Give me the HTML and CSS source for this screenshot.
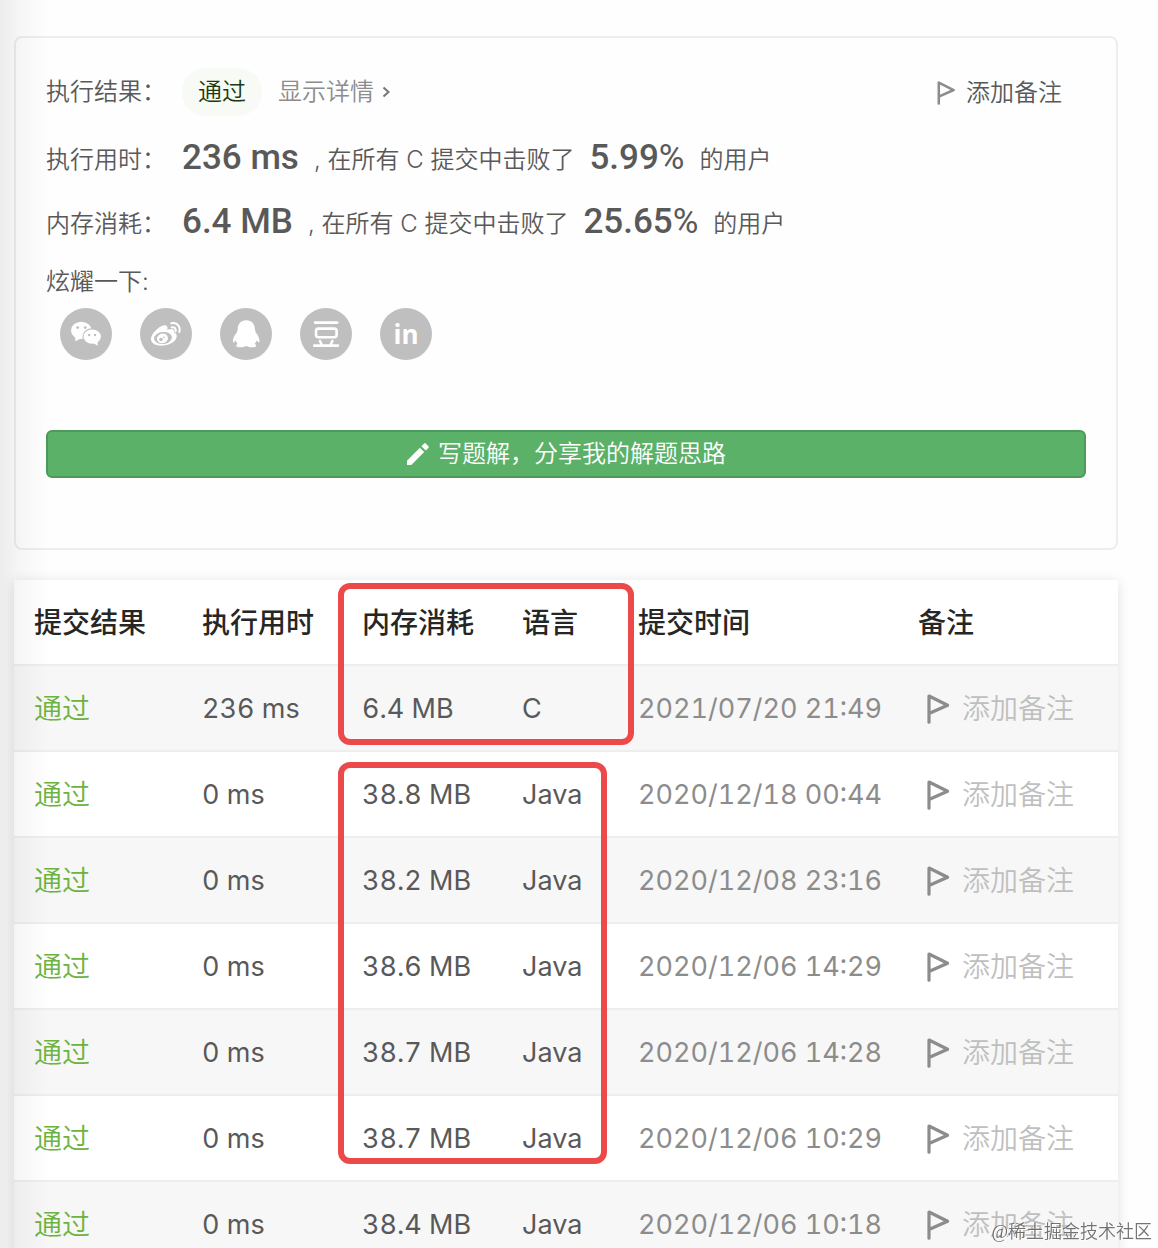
FILE: index.html
```html
<!DOCTYPE html>
<html lang="zh-CN">

<head>
    <meta charset="UTF-8">
    <meta name="viewport" content="width=device-width, initial-scale=1.0">
    <title>提交记录</title>
    <link rel="stylesheet" href="styles.css">
</head>

<body>
    <svg class="sprite" aria-hidden="true">
        <symbol id="flag" viewBox="0 0 24 30">
            <path d="M3 28.2V2L21.6 11.3L3 19.5" fill="none" stroke="currentColor" stroke-width="3.2" stroke-linecap="round" stroke-linejoin="round" />
        </symbol>
    </svg>

    <main class="page">
        <section class="result">
            <div class="row status">
                <span class="label">执行结果：</span>
                <span class="badge">通过</span>
                <a class="detail" href="#">显示详情
                    <svg class="chevron" viewBox="0 0 8 12"><path d="M1.5 1.5L6.5 6L1.5 10.5" /></svg>
                </a>
                <button class="note" type="button"><svg class="flag"><use href="#flag" /></svg>添加备注</button>
            </div>
            <div class="row stat">
                <span class="label">执行用时：</span>
                <strong>236 ms</strong>
                <span class="text">, 在所有 C 提交中击败了</span>
                <strong>5.99<span class="percent">%</span></strong>
                <span class="text">的用户</span>
            </div>
            <div class="row stat">
                <span class="label">内存消耗：</span>
                <strong>6.4 MB</strong>
                <span class="text">, 在所有 C 提交中击败了</span>
                <strong>25.65<span class="percent">%</span></strong>
                <span class="text">的用户</span>
            </div>
            <div class="share-title">炫耀一下:</div>
            <div class="share">
                <a href="#" aria-label="微信">
                    <svg viewBox="0 0 52 52">
                        <ellipse cx="21.3" cy="22.4" rx="10.3" ry="8.6" />
                        <path d="M15 28L15.4 33.2L21 30.5Z" />
                        <ellipse class="cut" cx="32.2" cy="28.6" rx="9.8" ry="8.4" />
                        <ellipse cx="32.2" cy="28.6" rx="8.7" ry="7.2" />
                        <path d="M33 35L38 37.8L37.4 33Z" />
                        <circle class="cut" cx="17.7" cy="19.6" r="1.4" />
                        <circle class="cut" cx="25.2" cy="19.6" r="1.4" />
                        <circle class="cut" cx="29.2" cy="27" r="1.2" />
                        <circle class="cut" cx="35" cy="27" r="1.2" />
                    </svg>
                </a>
                <a href="#" aria-label="微博">
                    <svg viewBox="0 0 52 52">
                        <path d="M11 31C11 26 19 17.5 24.5 17.2C27.5 17 28 19.5 27.2 22C31 20.5 34.5 20.5 34.2 24.6C38 26 37 30.5 34.5 33C28 39.5 11 39.5 11 31Z" />
                        <ellipse class="cut" cx="23" cy="30" rx="9" ry="6" transform="rotate(-7 23 30)" />
                        <ellipse cx="22.4" cy="30.4" rx="5.6" ry="4.8" transform="rotate(-15 22.4 30.4)" />
                        <circle class="cut" cx="21" cy="31.5" r="1.8" />
                        <circle class="cut" cx="24" cy="29.4" r="0.8" />
                        <path class="line thin" d="M31.2 15.3C36.5 13.7 41 18.5 39.3 24M31.7 19.3C34.3 18.6 36.3 20.6 35.6 23.3" />
                    </svg>
                </a>
                <a href="#" aria-label="QQ">
                    <svg viewBox="0 0 52 52">
                        <path d="M26.3 12.3C20.6 12.3 17.6 16.3 17.7 21.7C17.3 22.3 17 23.1 17.1 24C14.5 27 12.6 30.8 13 33.8C13.2 35.3 14.8 34 15.7 32.3C16 33.7 16.8 35 17.8 36C16.7 36.5 16 37.2 16.2 38C16.8 39.8 23.5 39.6 26.2 38C29 39.6 35.6 39.8 36.2 38C36.4 37.2 35.7 36.5 34.6 36C35.7 35 36.4 33.7 36.8 32.3C37.7 34 39.2 35.3 39.4 33.8C39.8 30.8 38 27 35.5 24C35.6 23.1 35.3 22.3 34.9 21.7C35 16.3 32 12.3 26.3 12.3Z" />
                    </svg>
                </a>
                <a href="#" aria-label="豆瓣">
                    <svg viewBox="0 0 52 52">
                        <path class="line" d="M15 14.6H37.3M14.2 37.6H38M20 33L21.4 36M32.4 33L31 36" />
                        <rect class="line" x="16" y="20.6" width="20.6" height="8.6" rx="2.5" />
                    </svg>
                </a>
                <a class="linkedin" href="#" aria-label="LinkedIn">in</a>
            </div>
            <button class="write" type="button">
                <svg viewBox="0 0 24 24"><path d="M1 18.7V23H5.3L18.2 10.1L13.9 5.8ZM22.4 5.9C22.9 5.4 22.9 4.7 22.4 4.2L19.8 1.6C19.3 1.1 18.6 1.1 18.1 1.6L15.4 4.3L19.7 8.6Z" /></svg>
                写题解，分享我的解题思路
            </button>
        </section>

        <section class="history">
            <table>
                <colgroup>
                    <col class="col-result">
                    <col class="col-time">
                    <col class="col-memory">
                    <col class="col-lang">
                    <col class="col-date">
                    <col class="col-note">
                </colgroup>
                <thead>
                    <tr>
                        <th>提交结果</th>
                        <th>执行用时</th>
                        <th>内存消耗</th>
                        <th>语言</th>
                        <th>提交时间</th>
                        <th>备注</th>
                    </tr>
                </thead>
                <tbody>
                    <tr>
                        <td><a href="#">通过</a></td>
                        <td>236 ms</td>
                        <td>6.4 MB</td>
                        <td>C</td>
                        <td class="date">2021/07/20 21:49</td>
                        <td><button class="note" type="button"><svg class="flag"><use href="#flag" /></svg>添加备注</button></td>
                    </tr>
                    <tr>
                        <td><a href="#">通过</a></td>
                        <td>0 ms</td>
                        <td>38.8 MB</td>
                        <td>Java</td>
                        <td class="date">2020/12/18 00:44</td>
                        <td><button class="note" type="button"><svg class="flag"><use href="#flag" /></svg>添加备注</button></td>
                    </tr>
                    <tr>
                        <td><a href="#">通过</a></td>
                        <td>0 ms</td>
                        <td>38.2 MB</td>
                        <td>Java</td>
                        <td class="date">2020/12/08 23:16</td>
                        <td><button class="note" type="button"><svg class="flag"><use href="#flag" /></svg>添加备注</button></td>
                    </tr>
                    <tr>
                        <td><a href="#">通过</a></td>
                        <td>0 ms</td>
                        <td>38.6 MB</td>
                        <td>Java</td>
                        <td class="date">2020/12/06 14:29</td>
                        <td><button class="note" type="button"><svg class="flag"><use href="#flag" /></svg>添加备注</button></td>
                    </tr>
                    <tr>
                        <td><a href="#">通过</a></td>
                        <td>0 ms</td>
                        <td>38.7 MB</td>
                        <td>Java</td>
                        <td class="date">2020/12/06 14:28</td>
                        <td><button class="note" type="button"><svg class="flag"><use href="#flag" /></svg>添加备注</button></td>
                    </tr>
                    <tr>
                        <td><a href="#">通过</a></td>
                        <td>0 ms</td>
                        <td>38.7 MB</td>
                        <td>Java</td>
                        <td class="date">2020/12/06 10:29</td>
                        <td><button class="note" type="button"><svg class="flag"><use href="#flag" /></svg>添加备注</button></td>
                    </tr>
                    <tr>
                        <td><a href="#">通过</a></td>
                        <td>0 ms</td>
                        <td>38.4 MB</td>
                        <td>Java</td>
                        <td class="date">2020/12/06 10:18</td>
                        <td><button class="note" type="button"><svg class="flag"><use href="#flag" /></svg>添加备注</button></td>
                    </tr>
                </tbody>
            </table>
            <div class="mark mark-c"></div>
            <div class="mark mark-java"></div>
        </section>
    </main>
    <div class="edge"></div>
    <div class="watermark">@稀土掘金技术社区</div>
</body>

</html>
```
FILE: styles.css
```css
* {
    box-sizing: border-box;
}

body {
    margin: 0;
    height: 100vh;
    overflow: hidden;
    background-color: #fefefe;
    color: #595959;
    font-family: Inter, "Noto Sans CJK SC", sans-serif;
    font-size: 24px;
    font-weight: 350;
    line-height: 36px;
}

a {
    color: inherit;
    text-decoration: none;
}

button {
    font: inherit;
    color: inherit;
    border: none;
    background: none;
    padding: 0;
    cursor: pointer;
}

.sprite {
    display: none;
}

.page {
    padding: 36px 40px 0 14px;
}

/* Result card */
.result {
    padding: 30px 30px 70px;
    border: 2px solid #eee;
    border-radius: 8px;
}

.row {
    display: flex;
    align-items: center;
}

.label {
    width: 136px;
    white-space: nowrap;
}

.status {
    height: 48px;
    margin-bottom: 10px;
}

.badge {
    padding: 0 16px;
    line-height: 48px;
    border-radius: 24px;
    background-color: #f7faf5;
    color: #1c3a0e;
}

.detail {
    display: flex;
    align-items: center;
    gap: 8px;
    margin-left: 16px;
    color: #8c8c8c;
}

.chevron {
    width: 8px;
    height: 12px;
    fill: none;
    stroke: #777;
    stroke-width: 2;
}

.note {
    display: flex;
    align-items: center;
}

.flag {
    width: 24px;
    height: 30px;
    color: #8c8c8c;
}

.status .note {
    gap: 10px;
    margin: 2px 24px 0 auto;
}

.status .flag {
    width: 20px;
    height: 24px;
}

.stat {
    height: 64px;
    white-space: nowrap;
}

.stat .label,
.stat .text {
    padding-top: 4px;
}

.stat strong {
    font-family: Roboto, sans-serif;
    font-size: 35px;
    font-weight: 500;
}

.stat .percent {
    font-weight: 400;
}

.stat .text {
    margin: 0 15px;
}

.share-title {
    margin-top: 10px;
}

.share {
    display: flex;
    gap: 28px;
    margin: 8px 0 70px 14px;
}

.share a {
    width: 52px;
    height: 52px;
    border-radius: 50%;
    background-color: #bfbfbf;
    color: #fff;
}

.share svg {
    display: block;
    fill: #fff;
}

.share .cut {
    fill: #bfbfbf;
}

.share .line {
    fill: none;
    stroke: #fff;
    stroke-width: 2.6;
    stroke-linecap: round;
}

.share .thin {
    stroke-width: 2;
}

.share .linkedin {
    font-family: "Open Sans", sans-serif;
    font-size: 26px;
    font-weight: 700;
    line-height: 52px;
    text-align: center;
}

.write {
    display: flex;
    align-items: center;
    justify-content: center;
    gap: 8px;
    width: 100%;
    height: 48px;
    border: 2px solid #4e9a5a;
    border-radius: 6px;
    background-color: #5cb169;
    color: #fff;
}

.write svg {
    width: 24px;
    height: 24px;
    fill: #fff;
}

/* Submission list */
.history {
    position: relative;
    margin-top: 30px;
    background-color: #fff;
    box-shadow: 0 2px 12px rgba(0, 0, 0, 0.12);
}

table {
    width: 100%;
    table-layout: fixed;
    border-collapse: separate;
    border-spacing: 0;
}

.col-result {
    width: 168px;
}

.col-time,
.col-memory {
    width: 160px;
}

.col-lang {
    width: 116px;
}

.col-date {
    width: 280px;
}

th,
td {
    height: 86px;
    padding: 2px 0 0 20px;
    border-bottom: 2px solid #eee;
    text-align: left;
    white-space: nowrap;
}

th {
    color: #262626;
    font-size: 28px;
    font-weight: 500;
}

td {
    font-size: 27px;
    font-weight: 400;
    font-variant-numeric: tabular-nums;
}

tbody tr:nth-child(odd) {
    background-color: #f7f7f7;
}

td a,
td .note {
    font-size: 28px;
    font-weight: 350;
}

td a {
    color: #6db33f;
}

.date {
    color: #8c8c8c;
}

td .note {
    gap: 12px;
    margin-left: 8px;
    color: #bfbfbf;
}

/* Highlight frames drawn over the table */
.mark {
    position: absolute;
    left: 324px;
    border: 6px solid #ec4a4a;
    border-radius: 12px;
}

.mark-c {
    top: 3px;
    width: 296px;
    height: 162px;
}

.mark-java {
    top: 182px;
    width: 269px;
    height: 402px;
}

.edge {
    position: fixed;
    top: 0;
    bottom: 0;
    left: 0;
    width: 50px;
    background: linear-gradient(to right, rgba(0, 0, 0, 0.07), rgba(0, 0, 0, 0.03) 40%, transparent);
    pointer-events: none;
}

.watermark {
    position: fixed;
    right: 6px;
    bottom: 4px;
    color: rgba(70, 70, 70, 0.75);
    font-family: "Liberation Serif", "Noto Sans CJK SC", serif;
    font-size: 18px;
    line-height: 24px;
    text-shadow: 1px 1px 0 #fff;
}
```
